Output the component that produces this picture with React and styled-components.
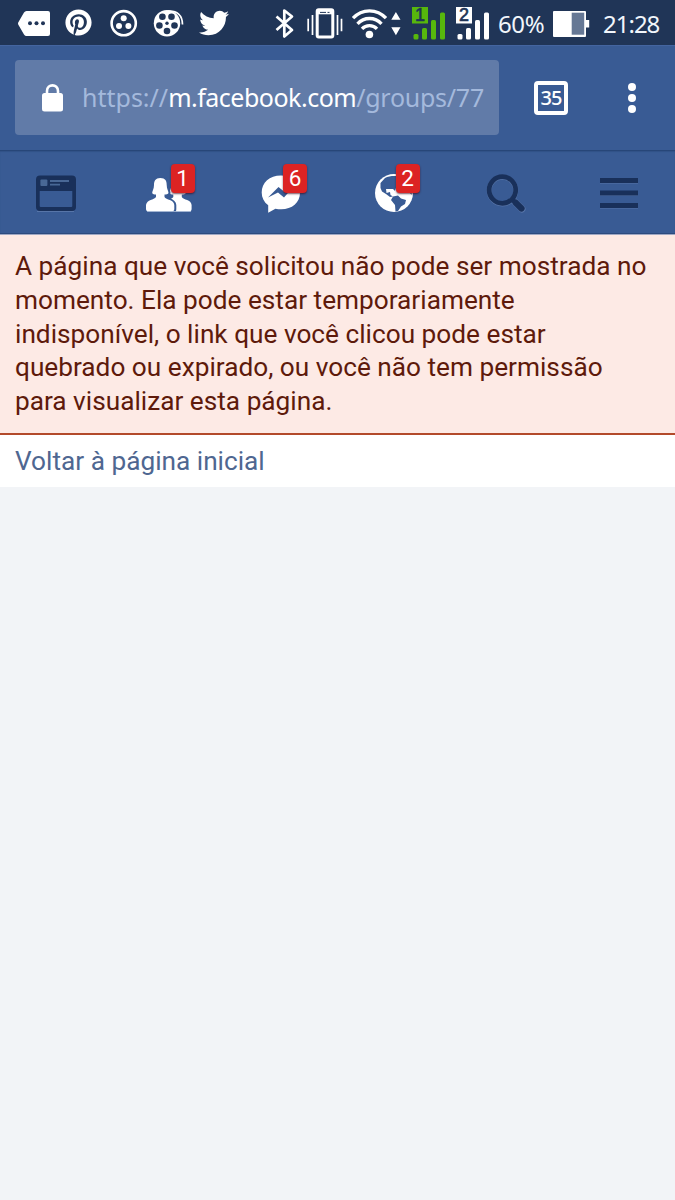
import React from "react";
import styled, { createGlobalStyle } from "styled-components";
import { FaPinterest, FaTwitter } from "react-icons/fa";

const GlobalStyle = createGlobalStyle`
  * { box-sizing: border-box; }
  body { margin: 0; background: #f2f4f7; font-family: Roboto, "Noto Sans", sans-serif; }
`;

const Screen = styled.div`
  min-height: 1200px;
  background: #f2f4f7;
  overflow: hidden;
`;

const StatusBar = styled.header`
  display: flex;
  align-items: center;
  height: 45px;
  background: #203557;
  color: #fff;
`;

const StatusItem = styled.div`
  display: flex;
  flex: none;
  width: ${(p) => p.$w}px;
  margin-left: ${(p) => p.$gap || 0}px;
  svg { display: block; flex: none; }
`;

const StatusText = styled.span`
  flex: none;
  width: ${(p) => p.$w}px;
  margin-left: ${(p) => p.$gap}px;
  padding-top: 2px;
  font: 24px/42px "Noto Sans", sans-serif;
  letter-spacing: ${(p) => p.$track}px;
  white-space: nowrap;
  color: #f1f6fb;
`;

const BrowserBar = styled.div`
  display: flex;
  align-items: center;
  height: 105px;
  padding-left: 15px;
  background: #395b94;
  box-shadow: inset 0 1px 0 #4465a0;
`;

const AddressField = styled.div`
  display: flex;
  align-items: center;
  width: 484px;
  height: 75px;
  padding-left: 27px;
  border-radius: 4px;
  background: #617ba8;
  svg { flex: none; }
`;

const Address = styled.div`
  margin-left: 19px;
  padding-bottom: 2px;
  font: 25px/36px "Noto Sans", sans-serif;
  letter-spacing: -0.25px;
  white-space: nowrap;
  color: #a4b9dc;
`;

const Scheme = styled.span`
  letter-spacing: 0;
`;

const Host = styled.span`
  color: #fff;
  letter-spacing: -0.5px;
`;

const TabCount = styled.div`
  display: flex;
  align-items: center;
  justify-content: center;
  width: 34px;
  height: 34px;
  margin-left: 35px;
  border: 4px solid #fff;
  border-radius: 4px;
  color: #fff;
  font: 500 20px/26px "Noto Sans", sans-serif;
  letter-spacing: -0.9px;
`;

const MoreMenu = styled.div`
  display: flex;
  flex-direction: column;
  gap: 3px;
  margin-left: 60px;
`;

const Dot = styled.i`
  width: 8px;
  height: 8px;
  border-radius: 50%;
  background: #fff;
`;

const NavBar = styled.nav`
  display: grid;
  grid-template-columns: repeat(6, 1fr);
  height: 85px;
  background: #395b94;
  border-top: 1px solid #274678;
  border-bottom: 1px solid #9fa8c4;
  box-shadow: inset 0 1px 1px #315287, inset 0 -1px 0 #2d4b7e;
`;

const NavItem = styled.div`
  position: relative;
  display: flex;
  justify-content: center;
  svg { display: block; margin-top: -1px; }
`;

const Badge = styled.span`
  position: absolute;
  top: 13px;
  left: 58px;
  width: 24px;
  height: 29px;
  border-radius: 4px;
  background: #dc2323;
  box-shadow: 0 1px 2px rgba(60, 10, 30, 0.7);
  color: #fff;
  font: 22.5px/28px Roboto, sans-serif;
  text-align: center;
`;

const Notice = styled.section`
  height: 200px;
  padding: 15px 15px 0;
  background: #fdeae5;
  border-bottom: 2px solid #b34a2b;
  color: #5e1a0b;
  font-size: 26.22px;
  line-height: 33.8px;
`;

const LinkRow = styled.div`
  height: 52px;
  padding: 10px 15px;
  background: #fff;
`;

const HomeLink = styled.a`
  font-size: 26.22px;
  line-height: 33.8px;
  color: #4f6791;
`;

const StatusGlyph = ({ x, w, children }) => (
  <svg width={w} height="45" viewBox={`${x} 0 ${w} 45`} fill="#fff">{children}</svg>
);

const NavGlyph = ({ children }) => (
  <svg width="60" height="84" viewBox="-30 0 60 84">{children}</svg>
);

const Bars = ({ x, color, label }) => (
  <StatusGlyph x={x} w={34}>
    <rect x={x} y="7" width="16" height="16.5" fill={color} />
    <text x={x + 8} y="21" textAnchor="middle" fontFamily="Liberation Sans, sans-serif" fontSize="18" fontWeight="400" stroke="#203557" strokeWidth=".6" fill="#203557">{label}</text>
    <g fill={color}>
      <rect x={x + 1.5} y="34" width="5" height="5.5" rx="1.5" />
      <rect x={x + 10} y="28" width="5" height="11.5" rx="1.5" />
      <rect x={x + 19} y="20" width="5" height="19.5" rx="1.5" />
      <rect x={x + 28} y="12.5" width="5" height="27" rx="1.5" />
    </g>
  </StatusGlyph>
);

function StatusIcons() {
  const ink = "#203557";
  return (
    <StatusBar>
      <StatusItem $w={32} $gap={18}>
        <StatusGlyph x={18} w={32}>
          <path d="M26.5 11H48q2 0 2 2v21q0 2-2 2H26.5q-1.5 0-2.5-1.5L18.5 25q-1-1.5 0-3L24 12.5Q25 11 26.5 11z" />
          <g fill={ink}><circle cx="30" cy="23.3" r="2" /><circle cx="36.5" cy="23.3" r="2" /><circle cx="43" cy="23.3" r="2" /></g>
        </StatusGlyph>
      </StatusItem>
      <StatusItem $w={27} $gap={15}><FaPinterest size={27} /></StatusItem>
      <StatusItem $w={28} $gap={18}>
        <StatusGlyph x={110} w={28}>
          <circle cx="123.7" cy="23.2" r="12.1" fill="none" stroke="#fff" strokeWidth="2.6" />
          <circle cx="123.7" cy="18.3" r="3" /><circle cx="119" cy="26" r="3" /><circle cx="128.4" cy="26" r="3" />
        </StatusGlyph>
      </StatusItem>
      <StatusItem $w={32} $gap={15}>
        <StatusGlyph x={153} w={32}>
          <circle cx="167" cy="23.2" r="13.2" />
          <g fill={ink}>
            <circle cx="162.4" cy="16.8" r="3.3" /><circle cx="171.5" cy="16.8" r="3.3" />
            <circle cx="159.4" cy="25.5" r="3.3" /><circle cx="174.5" cy="25.5" r="3.3" />
            <circle cx="167" cy="31" r="3.3" /><circle cx="167" cy="23.3" r="1.7" />
          </g>
          <path d="M168 11.2C177 10.5 182.5 15 182.5 24.5" fill="none" stroke="#fff" strokeWidth="1.7" />
        </StatusGlyph>
      </StatusItem>
      <StatusItem $w={30} $gap={14}><FaTwitter size={30} /></StatusItem>
      <StatusItem $w={22} $gap={45}>
        <StatusGlyph x={274} w={22}>
          <path d="M276.5 16.5 292 30l-7.7 6.5V10.5l7.7 6L276.5 30" fill="none" stroke="#fff" strokeWidth="2.7" strokeLinejoin="round" />
        </StatusGlyph>
      </StatusItem>
      <StatusItem $w={36} $gap={11}>
        <StatusGlyph x={307} w={36}>
          <rect x="317.2" y="9.8" width="15.6" height="27.2" rx="1.5" fill="none" stroke="#fff" strokeWidth="3" />
          <path d="M318 12.300h14" stroke="#fff" strokeWidth="4" />
          <path d="M320 12.4h6M327.5 12.4h2" stroke={ink} strokeWidth="1" />
          <path d="M312.5 15v20M337.5 15v20M308.2 18.8v12.4M341.5 18.8v12.4" stroke="#fff" strokeWidth="1.7" />
        </StatusGlyph>
      </StatusItem>
      <StatusItem $w={50} $gap={8}>
        <StatusGlyph x={351} w={50}>
          <circle cx="369.4" cy="34.5" r="3.8" />
          <path d="M353 18.2C362 8.3 377 8.3 386 18.2M357.5 23.8C364 16.7 375 16.7 381.5 23.8M362 28.8C366 24.5 373 24.5 377 28.8" fill="none" stroke="#fff" strokeWidth="3.3" />
          <path d="M391.3 19.7 395.9 12l4.6 7.7zM391.3 27.3h9.2l-4.6 8z" />
        </StatusGlyph>
      </StatusItem>
      <StatusItem $w={34} $gap={11}><Bars x={412} color="#57b70c" label="1" /></StatusItem>
      <StatusItem $w={34} $gap={10}><Bars x={456} color="#fff" label="2" /></StatusItem>
      <StatusText $w={48} $gap={8} $track={-0.4}>60%</StatusText>
      <StatusItem $w={37} $gap={7}>
        <StatusGlyph x={553} w={37}>
          <rect x="553" y="11" width="33" height="26" rx="1" />
          <rect x="571.7" y="12.7" width="12.5" height="22" fill="#667895" />
          <rect x="586" y="20" width="3.2" height="7.5" />
        </StatusGlyph>
      </StatusItem>
      <StatusText $w={60} $gap={13} $track={-1}>21:28</StatusText>
    </StatusBar>
  );
}

function FeedIcon() {
  return (
    <NavGlyph>
      <path fillRule="evenodd" fill="#19305a" d="M-16 25.5H16q4 0 4 4V57q0 4-4 4H-16q-4 0-4-4V29.500q0-4 4-4zM-16.300 41v15q0 1 1 1H15.300q1 0 1-1V41z" />
      <path d="M-19 61.500H18" stroke="#5775a8" strokeWidth="1" />
      <rect x="-15.600" y="29.500" width="7" height="6.500" rx="1" fill="#496896" />
      <path d="M-6 31H13M-6 34.700H4" stroke="#496896" strokeWidth="1.800" />
    </NavGlyph>
  );
}

function FriendsIcon() {
  const person = "M-8.700 28C-3.500 28-2.300 31-2.300 35C-2.300 39-.5 41-.5 43C-.8 44.500-3 44.500-4.500 44.500V47C-3 50 5 49.500 5.300 55V59.200q0 2-2 2H-21q-2 0-2-2V55C-22 49.500-15 50-13 47v-2.500C-14.500 44.500-16.500 44.500-16.800 43C-16.800 41-15 39-15 35C-15 31-13.500 28-8.700 28z";
  return (
    <NavGlyph>
      <path d={person} transform="translate(17.300 0)" fill="#fff" />
      <path d={person} fill="#395b94" stroke="#395b94" strokeWidth="4" />
      <path d={person} fill="#fff" />
      <path d="M-22 61.500H22" stroke="#bdcbe2" strokeWidth=".7" />
    </NavGlyph>
  );
}

function MessengerIcon() {
  return (
    <NavGlyph>
      <path fill="#fff" d="M0 25.500C-11.500 25.500-19.300 32.500-19.300 42.500c0 5.200 2.200 9.500 6.500 12.800V62.700l7.200-4C8 61.500 19 54.500 19 42.500 19 32.500 11 25.500 0 25.500z" />
      <path fill="#395b94" d="m-13 47.500 10.500-10.500 5.500 4.500L13 36 3 47.500-3 42.500z" />
    </NavGlyph>
  );
}

function GlobeIcon() {
  return (
    <NavGlyph>
      <circle cx="0" cy="43" r="19" fill="#fff" />
      <g fill="#395b94">
        <path d="M-9 28C-5 26 0 25.500 6 26.500L9 32 6 36 2 38 1 41-1 39-8 39-7.500 43-4 42-3.500 45-1 46.500-4 47-8 44-12 41.500-13.500 38-13.500 33z" />
        <path d="M-1 46.500 4 45.500 7 48.500 12 50 11 54 7 56.500 4 61 1.500 61.500 1 55-3 50z" />
        <path d="M11 36l5 2 2 7-3-3-4-1z" />
      </g>
    </NavGlyph>
  );
}

function SearchIcon() {
  return (
    <NavGlyph>
      <circle cx="-3.600" cy="40.600" r="13.300" fill="none" stroke="#5775a8" strokeWidth="5" />
      <path d="m7 50 9 9" stroke="#5775a8" strokeWidth="7" strokeLinecap="round" />
      <circle cx="-3.600" cy="40" r="13.300" fill="none" stroke="#19305a" strokeWidth="4.800" />
      <path d="M6 49.500 8 51.500" stroke="#19305a" strokeWidth="4" />
      <path d="m9.500 52.500 6 6" stroke="#19305a" strokeWidth="6.200" strokeLinecap="round" />
    </NavGlyph>
  );
}

function MenuIcon() {
  return (
    <NavGlyph>
      <path d="M-19 31H19M-19 43.500H19M-19 56H19" stroke="#5775a8" strokeWidth="5" />
      <path d="M-19 30.500H19M-19 43H19M-19 55.500H19" stroke="#19305a" strokeWidth="4.900" />
    </NavGlyph>
  );
}

export default function App() {
  return (
    <Screen>
      <GlobalStyle />
      <StatusIcons />
      <BrowserBar>
        <AddressField>
          <svg width="21" height="30" viewBox="0 0 21 30">
            <path d="M5 14V8c0-7.500 11-7.500 11 0v6" fill="none" stroke="#fff" strokeWidth="2.600" />
            <rect y="10" width="21" height="18.500" rx="2.500" fill="#fff" />
          </svg>
          <Address><Scheme>https://</Scheme><Host>m.facebook.com</Host>/groups/77</Address>
        </AddressField>
        <TabCount>35</TabCount>
        <MoreMenu><Dot /><Dot /><Dot /></MoreMenu>
      </BrowserBar>
      <NavBar>
        <NavItem><FeedIcon /></NavItem>
        <NavItem><FriendsIcon /><Badge>1</Badge></NavItem>
        <NavItem><MessengerIcon /><Badge>6</Badge></NavItem>
        <NavItem><GlobeIcon /><Badge>2</Badge></NavItem>
        <NavItem><SearchIcon /></NavItem>
        <NavItem><MenuIcon /></NavItem>
      </NavBar>
      <Notice>
        A página que você solicitou não pode ser mostrada no momento. Ela pode estar temporariamente indisponível, o link que você clicou pode estar quebrado ou expirado, ou você não tem permissão para visualizar esta página.
      </Notice>
      <LinkRow><HomeLink>Voltar à página inicial</HomeLink></LinkRow>
    </Screen>
  );
}
